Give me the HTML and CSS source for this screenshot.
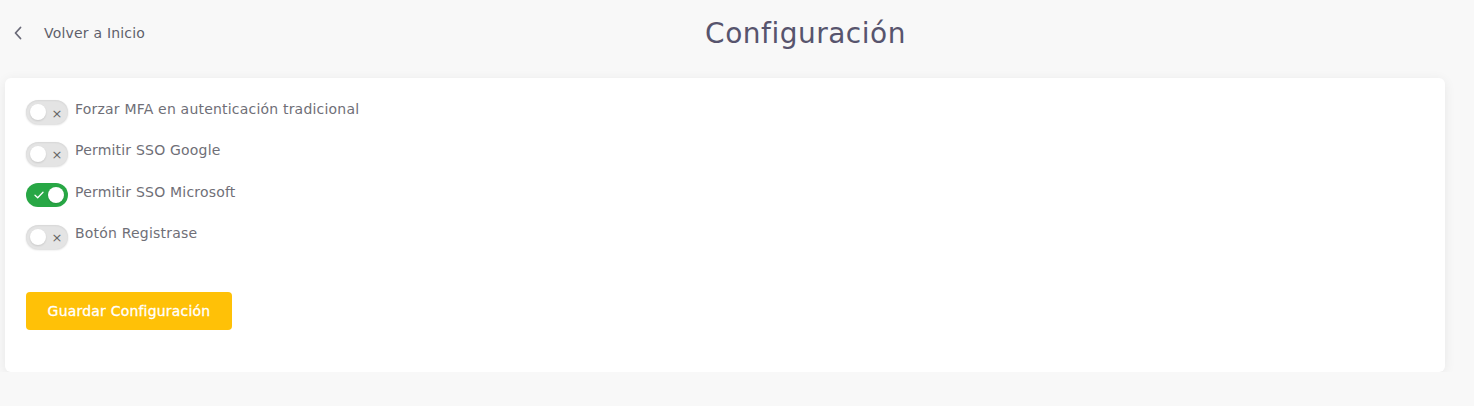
FILE: index.html
```html
<!DOCTYPE html>
<html lang="es">
<head>
<meta charset="utf-8">
<title>Configuración</title>
<link rel="stylesheet" href="styles.css">
</head>
<body>
<div class="page">
  <header class="header">
    <a class="back" href="#">
      <svg class="chev" width="10" height="14" viewBox="0 0 10 14"><path d="M7.5 1.5 L2.5 7 L7.5 12.5" fill="none" stroke="#6a6a78" stroke-width="1.8" stroke-linecap="round" stroke-linejoin="round"/></svg>
      <span>Volver a Inicio</span>
    </a>
    <h1 class="title">Configuración</h1>
  </header>
  <main class="card">
    <div class="options">
      <label class="opt">
        <span class="switch off"><span class="knob"></span><span class="mark">×</span></span>
        <span class="lbl">Forzar MFA en autenticación tradicional</span>
      </label>
      <label class="opt">
        <span class="switch off"><span class="knob"></span><span class="mark">×</span></span>
        <span class="lbl">Permitir SSO Google</span>
      </label>
      <label class="opt">
        <span class="switch on"><span class="mark"><svg width="10" height="8" viewBox="0 0 10 8"><path d="M1 4.2 L3.7 6.7 L9 1.3" fill="none" stroke="#fff" stroke-width="1.3" stroke-linecap="round" stroke-linejoin="round"/></svg></span><span class="knob"></span></span>
        <span class="lbl">Permitir SSO Microsoft</span>
      </label>
      <label class="opt">
        <span class="switch off"><span class="knob"></span><span class="mark">×</span></span>
        <span class="lbl">Botón Registrase</span>
      </label>
    </div>
    <button class="save" type="button">Guardar Configuración</button>
  </main>
</div>
</body>
</html>
```

FILE: styles.css
```css
html, body {
  margin: 0;
  padding: 0;
  background: #f8f8f8;
}
body {
  font-family: "DejaVu Sans", "Noto Sans", sans-serif;
  color: #6b6b73;
}
.page {
  padding: 0 29px 0 5px;
  width: 1440px;
}
.header {
  display: flex;
  align-items: center;
  height: 66px;
  padding-left: 8px;
}
.back {
  display: flex;
  align-items: center;
  gap: 21px;
  text-decoration: none;
  color: #5f5f6b;
  font-size: 14px;
  letter-spacing: 0.2px;
  width: 153px;
}
.title {
  flex: 1;
  text-align: center;
  margin: 0;
  font-weight: 400;
  font-size: 28px;
  color: #57546d;
  letter-spacing: 0.5px;
}
.card {
  margin-top: 12px;
  background: #fff;
  border-radius: 6px;
  box-shadow: 0 2px 12px rgba(0, 0, 0, 0.07);
  padding: 22px 21px 42px;
  height: 230px;
}
.options {
  display: flex;
  flex-direction: column;
  gap: 17.6px;
}
.opt {
  display: flex;
  align-items: center;
  gap: 7px;
  height: 24px;
}
.switch {
  width: 42px;
  height: 24px;
  border-radius: 12px;
  display: flex;
  align-items: center;
  box-sizing: border-box;
  padding: 0 4px;
  flex: none;
}
.switch.off {
  background: #e4e4e4;
  box-shadow: inset 0 1px 2px rgba(0,0,0,0.06), 0 1px 2px rgba(0,0,0,0.15);
  justify-content: space-between;
}
.switch.on {
  background: #28a745;
  justify-content: space-between;
}
.knob {
  width: 16px;
  height: 16px;
  border-radius: 50%;
  background: #fff;
  box-shadow: 0 1px 2px rgba(0,0,0,0.12);
}
.mark {
  display: flex;
  align-items: center;
  justify-content: center;
  width: 14px;
  font-size: 13px;
  line-height: 1;
  color: #666;
  margin-top: 2px;
}
.switch.on .mark {
  margin-top: 0;
  margin-left: 2px;
}
.lbl {
  font-size: 14px;
  letter-spacing: 0.2px;
  color: #6f6f77;
  margin-top: -7px;
}
.save {
  margin-top: 43px;
  width: 206px;
  height: 38px;
  border: none;
  border-radius: 4px;
  background: #ffc107;
  color: #fff;
  font-family: inherit;
  font-size: 14px;
  font-weight: 400;
  letter-spacing: 0.2px;
  -webkit-text-stroke: 0.3px #fff;
}
```
